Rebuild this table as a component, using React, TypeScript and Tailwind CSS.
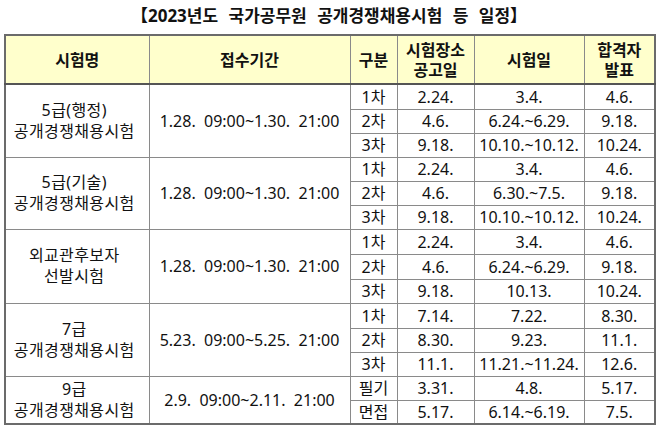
const FONT = { fontFamily: '"Noto Sans", "Noto Sans CJK KR", sans-serif' };

type Sub = { label: string; notice: string; exam: string; result: string; h: number };
type Group = { name: string[]; period: string; subs: Sub[] };

const groups: Group[] = [
  {
    name: ["5급(행정)", "공개경쟁채용시험"],
    period: "1.28.  09:00~1.30.  21:00",
    subs: [
      { label: "1차", notice: "2.24.", exam: "3.4.", result: "4.6.", h: 25 },
      { label: "2차", notice: "4.6.", exam: "6.24.~6.29.", result: "9.18.", h: 24 },
      { label: "3차", notice: "9.18.", exam: "10.10.~10.12.", result: "10.24.", h: 24 },
    ],
  },
  {
    name: ["5급(기술)", "공개경쟁채용시험"],
    period: "1.28.  09:00~1.30.  21:00",
    subs: [
      { label: "1차", notice: "2.24.", exam: "3.4.", result: "4.6.", h: 24 },
      { label: "2차", notice: "4.6.", exam: "6.30.~7.5.", result: "9.18.", h: 24 },
      { label: "3차", notice: "9.18.", exam: "10.10.~10.12.", result: "10.24.", h: 24 },
    ],
  },
  {
    name: ["외교관후보자", "선발시험"],
    period: "1.28.  09:00~1.30.  21:00",
    subs: [
      { label: "1차", notice: "2.24.", exam: "3.4.", result: "4.6.", h: 25 },
      { label: "2차", notice: "4.6.", exam: "6.24.~6.29.", result: "9.18.", h: 25 },
      { label: "3차", notice: "9.18.", exam: "10.13.", result: "10.24.", h: 24 },
    ],
  },
  {
    name: ["7급", "공개경쟁채용시험"],
    period: "5.23.  09:00~5.25.  21:00",
    subs: [
      { label: "1차", notice: "7.14.", exam: "7.22.", result: "8.30.", h: 25 },
      { label: "2차", notice: "8.30.", exam: "9.23.", result: "11.1.", h: 24 },
      { label: "3차", notice: "11.1.", exam: "11.21.~11.24.", result: "12.6.", h: 24 },
    ],
  },
  {
    name: ["9급", "공개경쟁채용시험"],
    period: "2.9.  09:00~2.11.  21:00",
    subs: [
      { label: "필기", notice: "3.31.", exam: "4.8.", result: "5.17.", h: 24 },
      { label: "면접", notice: "5.17.", exam: "6.14.~6.19.", result: "7.5.", h: 24 },
    ],
  },
];

const solid = "border border-solid border-[#8a8a8a]";
const head = `${solid} border-b-2 border-b-[#555] p-0`;

export default function App() {
  return (
    <div className="w-[658px] h-[428px] bg-white text-[#111]" style={FONT}>
      <h1 className="h-[34px] pt-[4px] text-center text-[17px] font-bold leading-[23px] [word-spacing:6px]">
        【2023년도 국가공무원 공개경쟁채용시험 등 일정】
      </h1>
      <table className="ml-[4px] w-[650px] table-fixed border-collapse border-2 border-solid border-[#6b6b6b] text-[16px]">
        <colgroup>
          <col className="w-[144px]" />
          <col className="w-[201px]" />
          <col className="w-[47px]" />
          <col className="w-[77px]" />
          <col className="w-[110px]" />
          <col className="w-[71px]" />
        </colgroup>
        <thead>
          <tr className="h-[49px] bg-[#ffffcc] font-bold leading-[20px]">
            <th className={head}>시험명</th>
            <th className={head}>접수기간</th>
            <th className={head}>구분</th>
            <th className={head}>
              시험장소
              <br />
              공고일
            </th>
            <th className={head}>시험일</th>
            <th className={head}>
              합격자
              <br />
              발표
            </th>
          </tr>
        </thead>
        <tbody className="text-center leading-[20px]">
          {groups.map((g) =>
            g.subs.map((s, i) => {
              const cell = `${solid} ${i > 0 ? "[border-top-style:dotted] border-t-[#b0b0b0]" : ""} p-0 whitespace-nowrap`;
              return (
                <tr key={g.name.join() + s.label} style={{ height: s.h }}>
                  {i === 0 && (
                    <>
                      <td
                        rowSpan={g.subs.length}
                        className={`${solid} p-0 pr-[6px] leading-[21px] tracking-[0.4px]`}
                      >
                        {g.name[0]}
                        <br />
                        {g.name[1]}
                      </td>
                      <td rowSpan={g.subs.length} className={`${solid} p-0 whitespace-pre`}>
                        {g.period}
                      </td>
                    </>
                  )}
                  <td className={cell}>{s.label}</td>
                  <td className={cell}>{s.notice}</td>
                  <td className={cell}>{s.exam}</td>
                  <td className={cell}>{s.result}</td>
                </tr>
              );
            })
          )}
        </tbody>
      </table>
    </div>
  );
}
